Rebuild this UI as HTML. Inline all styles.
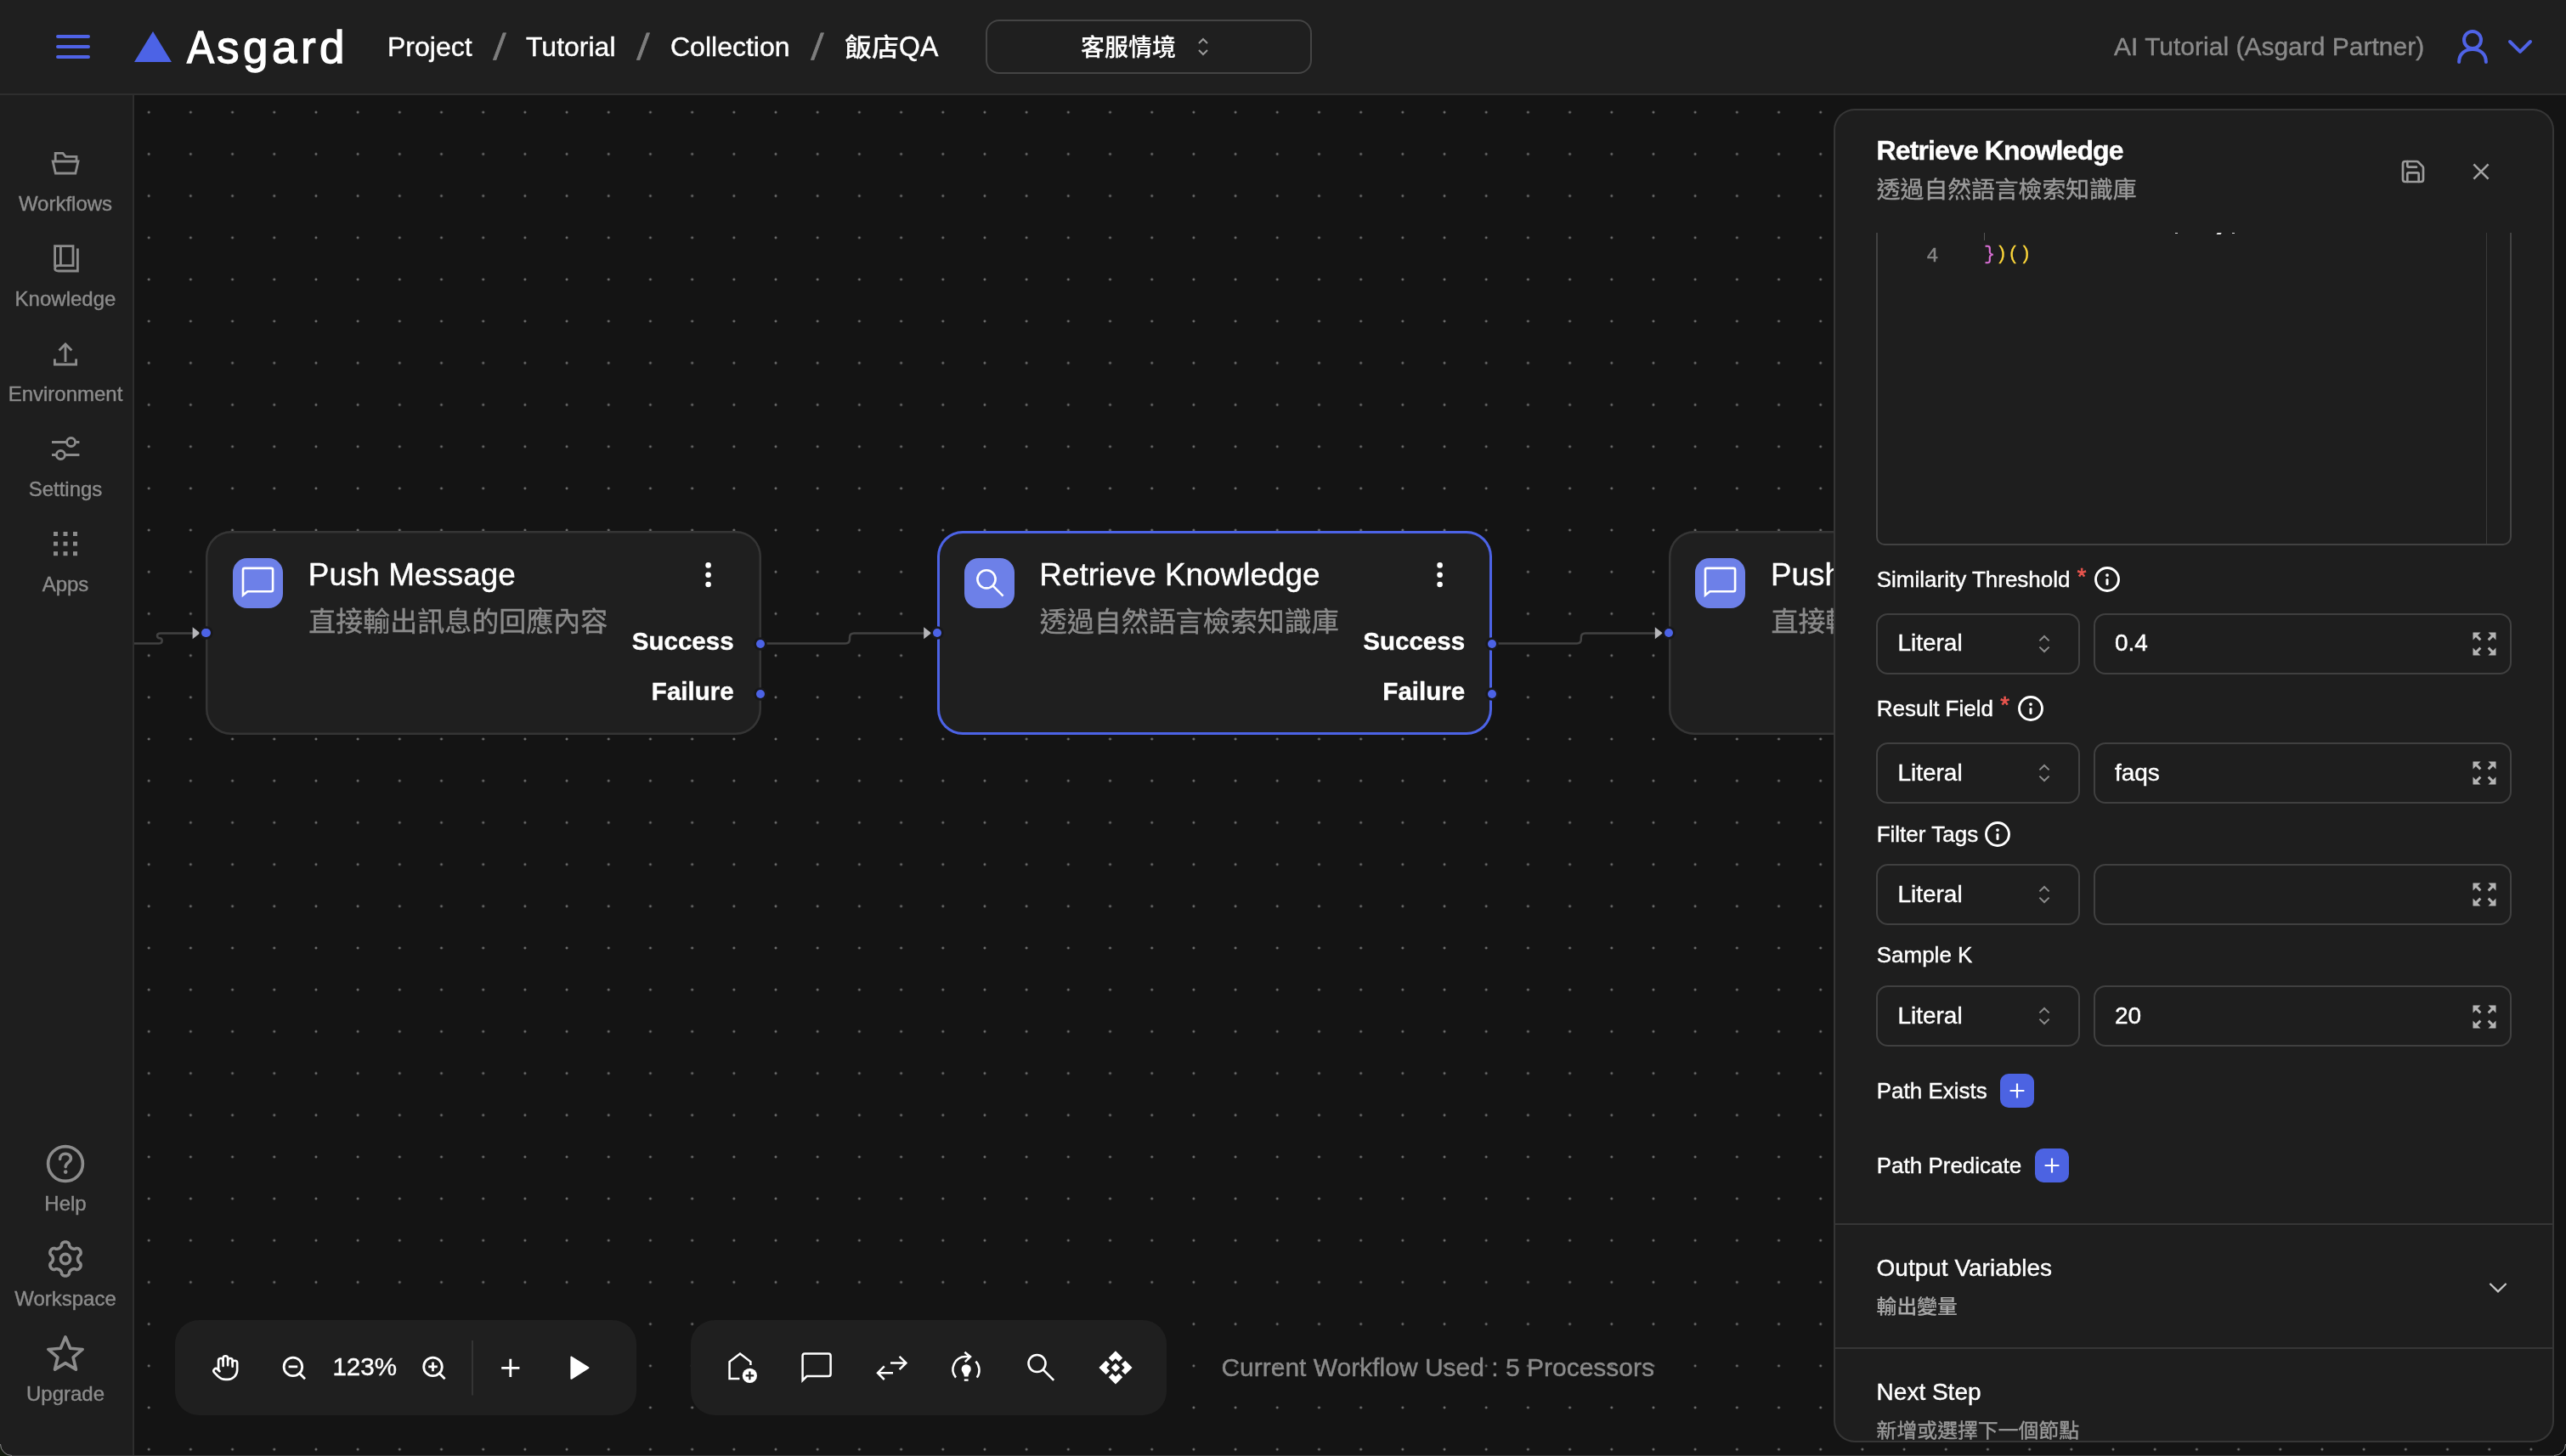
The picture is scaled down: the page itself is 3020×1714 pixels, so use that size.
<!DOCTYPE html>
<html lang="zh-Hant">
<head>
<meta charset="utf-8">
<title>Asgard</title>
<style>
*{box-sizing:border-box;margin:0;padding:0}
html,body{width:3020px;height:1714px;overflow:hidden;background:#141414}
body{will-change:transform;-webkit-text-stroke:0.4px;font-family:"Liberation Sans","Noto Sans CJK TC",sans-serif;color:#fff;position:relative}
.abs{position:absolute}
svg{display:block;overflow:visible}
/* header */
#header{position:absolute;left:0;top:0;width:3020px;height:112px;background:#1f1f1f;border-bottom:2px solid #2e2e2e;z-index:5}
#header .t{position:absolute;white-space:nowrap;line-height:1}
/* sidebar */
#sidebar{position:absolute;left:0;top:112px;width:158px;height:1602px;background:#1e1e1e;border-right:2px solid #2e2e2e;z-index:4}
.sl{position:absolute;left:0;width:154px;text-align:center;font-size:24px;line-height:1;color:#8c8c8c;white-space:nowrap}
.si{position:absolute}
/* canvas */
#canvas{position:absolute;left:158px;top:112px;width:2862px;height:1602px;background-color:#141414;overflow:hidden;
background-image:radial-gradient(circle,#7a7a7a 0,#6a6a6a 1px,transparent 1.9px);background-size:49.2px 49.2px;background-position:-7.4px -4.4px}
.node{position:absolute;width:653.3px;height:240px;border-radius:30px;background:#1f1f1f}
.node .ic{position:absolute;left:31.9px;top:31.9px;width:59.1px;height:59.1px;border-radius:17px;background:#6d80e8}
.node .tt{position:absolute;left:120.5px;top:34.4px;font-size:36.9px;line-height:1;white-space:nowrap;color:#fff}
.node .st{position:absolute;left:121px;top:90.5px;font-size:32px;line-height:1;white-space:nowrap;color:#8a8a8a}
.node .o{position:absolute;right:32px;font-size:29.5px;font-weight:bold;line-height:1;white-space:nowrap}
.hd{position:absolute;width:10.2px;height:10.2px;border-radius:50%;background:#4c63e6;box-shadow:0 0 0 2.7px #18181a}
/* panel */
#panel{position:absolute;left:2158px;top:128px;width:848px;height:1570px;background:#1e1e1e;box-shadow:inset 0 0 0 2px #363636;border-radius:25px;z-index:6;overflow:hidden}
#panel .t{position:absolute;white-space:nowrap;line-height:1}
.lbl{position:absolute;left:50.7px;font-size:26px;line-height:1;white-space:nowrap;color:#fff}
.sel{position:absolute;left:50.2px;width:239.9px;height:72px;border:2px solid #404040;border-radius:14px}
.sel span{position:absolute;left:23.2px;top:19.7px;font-size:28px;line-height:1}
.inp{position:absolute;left:305.9px;width:492px;height:72px;border:2px solid #404040;border-radius:14px}
.inp span{position:absolute;left:23.0px;top:19.7px;font-size:28px;line-height:1}
.plus{position:absolute;width:40px;height:40px;border-radius:10px;background:#4c63e2}
.tb{position:absolute;border-radius:28px;background:#1f1f1f}
</style>
</head>
<body>
<div id="canvas">
<svg class="abs" style="left:0;top:0" width="2862" height="1602" viewBox="158 112 2862 1602" fill="none" stroke="#424242" stroke-width="2.5">
<path d="M150 757.6 H186.4 Q190.7 757.6 190.7 754.3 Q190.7 751.4 187.8 751.3 Q185 751.2 185 748.3 Q185 745.4 189 745.4 H228"/>
<path d="M902 757.6 H995 Q1000 757.6 1000 752.6 V750.4 Q1000 745.4 1005 745.4 H1088"/>
<path d="M1762 757.6 H1855.8 Q1860.8 757.6 1860.8 752.6 V750.4 Q1860.8 745.4 1865.8 745.4 H1950"/>
<g fill="#b6b6ba" stroke="none"><polygon points="226.6,738.3 235.6,745.3 226.6,752.3"/><polygon points="1087.2,738.3 1096.2,745.3 1087.2,752.3"/><polygon points="1947.8,738.3 1956.8,745.3 1947.8,752.3"/></g>
</svg>
<div class="node" style="left:84.3px;top:513px;box-shadow:inset 0 0 0 2.5px #353535">
<div class="ic"><svg class="abs" style="left:10px;top:10px" width="40" height="40" viewBox="0 0 40 40"><path d="M2 33.6 V3.9 Q2 1.9 4 1.9 H35.1 Q37.1 1.9 37.1 3.9 V27.3 Q37.1 29.3 35.1 29.3 H7.4 Z" fill="none" stroke="#fff" stroke-width="2.6" stroke-linejoin="miter"/></svg></div>
<div class="tt">Push Message</div>
<div class="st">直接輸出訊息的回應內容</div>
<svg class="abs" style="left:586px;top:35px" width="12" height="34" viewBox="0 0 12 34"><circle cx="5.6" cy="5.4" r="3.3" fill="#fff"/><circle cx="5.6" cy="16.8" r="3.3" fill="#fff"/><circle cx="5.6" cy="28" r="3.3" fill="#fff"/></svg>
<div class="o" style="top:115.1px">Success</div>
<div class="o" style="top:174px">Failure</div>
<div class="hd" style="left:-4.9px;top:115.3px"></div><div class="hd" style="left:648px;top:127.6px"></div><div class="hd" style="left:648px;top:186.5px"></div>
</div>
<div class="node" style="left:944.8px;top:513px;box-shadow:inset 0 0 0 3px #4c63e6">
<div class="ic"><svg class="abs" style="left:10px;top:10px" width="40" height="40" viewBox="0 0 40 40"><circle cx="16" cy="14.8" r="10.6" fill="none" stroke="#fff" stroke-width="2.6"/><path d="M23.6 22.6 L35.6 34.6" stroke="#fff" stroke-width="2.6"/></svg></div>
<div class="tt">Retrieve Knowledge</div>
<div class="st">透過自然語言檢索知識庫</div>
<svg class="abs" style="left:586px;top:35px" width="12" height="34" viewBox="0 0 12 34"><circle cx="5.6" cy="5.4" r="3.3" fill="#fff"/><circle cx="5.6" cy="16.8" r="3.3" fill="#fff"/><circle cx="5.6" cy="28" r="3.3" fill="#fff"/></svg>
<div class="o" style="top:115.1px">Success</div>
<div class="o" style="top:174px">Failure</div>
<div class="hd" style="left:-4.9px;top:115.3px"></div><div class="hd" style="left:648px;top:127.6px"></div><div class="hd" style="left:648px;top:186.5px"></div>
</div>
<div class="node" style="left:1805.5px;top:513px;box-shadow:inset 0 0 0 2.5px #353535">
<div class="ic"><svg class="abs" style="left:10px;top:10px" width="40" height="40" viewBox="0 0 40 40"><path d="M2 33.6 V3.9 Q2 1.9 4 1.9 H35.1 Q37.1 1.9 37.1 3.9 V27.3 Q37.1 29.3 35.1 29.3 H7.4 Z" fill="none" stroke="#fff" stroke-width="2.6" stroke-linejoin="miter"/></svg></div>
<div class="tt">Push Message</div>
<div class="st">直接輸出訊息的回應內容</div>
<svg class="abs" style="left:586px;top:35px" width="12" height="34" viewBox="0 0 12 34"><circle cx="5.6" cy="5.4" r="3.3" fill="#fff"/><circle cx="5.6" cy="16.8" r="3.3" fill="#fff"/><circle cx="5.6" cy="28" r="3.3" fill="#fff"/></svg>
<div class="o" style="top:115.1px">Success</div>
<div class="o" style="top:174px">Failure</div>
<div class="hd" style="left:-4.9px;top:115.3px"></div><div class="hd" style="left:648px;top:127.6px"></div><div class="hd" style="left:648px;top:186.5px"></div>
</div>
<div class="tb" style="left:48.2px;top:1441.7px;width:543px;height:112.3px"></div>
<div class="tb" style="left:655px;top:1441.7px;width:560.2px;height:112.3px"></div>
<div class="abs" id="zoomtxt" style="left:233.4px;top:1482.4px;font-size:29.6px;line-height:1;white-space:nowrap">123%</div>
<div class="abs" id="cwu" style="left:1279.4px;top:1482.6px;font-size:30px;line-height:1;white-space:nowrap;color:#8a8a8a">Current Workflow Used : 5 Processors</div>
<svg class="abs" style="left:0;top:0" width="2862" height="1602" viewBox="158 112 2862 1602" fill="none" stroke="#fff" stroke-width="2.8">
<!-- hand -->
<g transform="translate(248.8 1593.5) scale(1.38)" stroke-width="1.9" stroke-linecap="round" stroke-linejoin="round"><path d="M18 11V6a2 2 0 0 0-2-2a2 2 0 0 0-2 2"/><path d="M14 10V4a2 2 0 0 0-2-2a2 2 0 0 0-2 2v2"/><path d="M10 10.5V6a2 2 0 0 0-2-2a2 2 0 0 0-2 2v8"/><path d="M18 8a2 2 0 1 1 4 0v6a8 8 0 0 1-8 8h-2c-2.8 0-4.5-.86-5.99-2.34l-3.6-3.6a2 2 0 0 1 2.83-2.82L7 15"/></g>
<!-- zoom out -->
<circle cx="344.9" cy="1608.9" r="10.8"/><path d="M339.6 1608.9 H350.2 M352.8 1617 L359 1623.2"/>
<!-- zoom in -->
<circle cx="509.5" cy="1608.9" r="10.8"/><path d="M504.2 1608.9 H514.8 M509.5 1603.6 V1614.2 M517.4 1617 L523.6 1623.2"/>
<!-- divider -->
<path d="M556 1578 V1642.4" stroke="#3a3a3a" stroke-width="1.6"/>
<!-- plus -->
<path d="M590.2 1610.3 H611.4 M600.8 1599.7 V1620.9" stroke-width="2.8"/>
<!-- play -->
<path d="M672.4 1597.6 L692.4 1610.2 L672.4 1622.8 Z" fill="#fff" stroke-width="2" stroke-linejoin="round"/>
<!-- add home -->
<path d="M870.4 1623 H858.6 V1603 L871 1593.6 L883.4 1603 V1607" stroke-width="2.5"/>
<circle cx="882.4" cy="1619.4" r="8.6" fill="#fff" stroke="none"/><path d="M877.6 1619.4 H887.2 M882.4 1614.6 V1624.2" stroke="#1f1f1f" stroke-width="2.2"/>
<!-- message -->
<path d="M944.6 1625 V1596.2 Q944.6 1593.6 947.2 1593.6 H975 Q977.6 1593.6 977.6 1596.2 V1617.4 Q977.6 1620 975 1620 H949.6 Z" stroke-width="2.5" stroke-linejoin="miter"/>
<!-- swap -->
<path d="M1048 1604.4 H1066 M1058.6 1596.8 L1066.4 1604.4 L1058.6 1612.2 M1051 1616.2 H1033.4 M1040.8 1608.4 L1033 1616.2 L1040.8 1624" stroke-width="2.5"/>
<!-- model training -->
<path d="M1125 1621.6 A15 15 0 0 1 1136.4 1597 H1141.6 M1135.4 1591.8 L1142 1597.2 L1135.8 1603.2" stroke-width="2.5"/>
<path d="M1148.4 1602.6 A15 15 0 0 1 1149.8 1621.6" stroke-width="2.5"/>
<path d="M1137.2 1606.2 a5.6 5.6 0 0 1 5.6 5.6 c0 3.2 -3.2 4.6 -3.2 8.6 h-4.8 c0 -4 -3.2 -5.4 -3.2 -8.6 a5.6 5.6 0 0 1 5.6 -5.6 Z" fill="#fff" stroke="none"/><path d="M1134.8 1624.6 H1139.6" stroke-width="2.4"/>
<!-- search -->
<circle cx="1220.5" cy="1605" r="10" stroke-width="2.6"/><path d="M1227.7 1612.3 L1240.2 1624.8" stroke-width="2.6"/>
<!-- api -->
<g><g transform="translate(1291.6 1588.5) scale(1.782)" fill="#fff" stroke="none"><path d="M14.9 12l-2.9 2.9-2.9-2.9 2.9-2.9 2.9 2.9z"/><path d="M12 6l2.12 2.12 2.5-2.5L12 1 7.38 5.62l2.5 2.5L12 6zm-6 6l2.12-2.12-2.5-2.5L1 12l4.62 4.62 2.5-2.5L6 12zm12 0l-2.12 2.12 2.5 2.5L23 12l-4.62-4.62-2.5 2.5L18 12zm-6 6l-2.12-2.12-2.5 2.5L12 23l4.62-4.62-2.5-2.5L12 18z"/></g></g>
</svg>
</div>
<div id="header">
<svg class="abs" style="left:64px;top:39px" width="44" height="32" viewBox="0 0 44 32"><g stroke="#4f63e6" stroke-width="4" stroke-linecap="round"><line x1="4" y1="4" x2="40" y2="4"/><line x1="4" y1="16" x2="40" y2="16"/><line x1="4" y1="28" x2="40" y2="28"/></g></svg>
<svg class="abs" style="left:158px;top:37px" width="44" height="36" viewBox="0 0 44 36"><polygon points="22,0 44,36 0,36" fill="#4c63e6"/></svg>
<div class="t" id="logo" style="left:220px;top:28.8px;font-size:53px;letter-spacing:4.5px;-webkit-text-stroke:1.3px #fff"><span style="letter-spacing:-0.4px;display:inline-block;transform:scaleX(0.91);transform-origin:0 0">A</span>sgard</div>
<div class="t" id="bc1" style="left:456px;top:39px;font-size:32px">Project</div>
<div class="t" style="left:582px;top:34.4px;font-size:43px;color:#7e7e7e;-webkit-text-stroke:0.9px #7e7e7e;transform:skewX(-5.5deg)">/</div>
<div class="t" id="bc2" style="left:619px;top:39px;font-size:32px">Tutorial</div>
<div class="t" style="left:751px;top:34.4px;font-size:43px;color:#7e7e7e;-webkit-text-stroke:0.9px #7e7e7e;transform:skewX(-5.5deg)">/</div>
<div class="t" id="bc3" style="left:789px;top:39px;font-size:32px">Collection</div>
<div class="t" style="left:956px;top:34.4px;font-size:43px;color:#7e7e7e;-webkit-text-stroke:0.9px #7e7e7e;transform:skewX(-5.5deg)">/</div>
<div class="t" id="bc4" style="left:994px;top:34px;font-size:32px;line-height:42px"><span style="font-weight:500;-webkit-text-stroke:0.15px;display:inline-block;transform:scaleY(0.935);transform-origin:50% 88%">飯店</span><span style="display:inline-block;transform:scaleY(1.05);transform-origin:50% 80%">QA</span></div>
<div class="abs" style="left:1160px;top:23px;width:384px;height:64px;border:2px solid #444;border-radius:16px"></div>
<div class="t" id="wf" style="left:1272px;top:36.5px;font-size:28px;line-height:40px;font-weight:500;-webkit-text-stroke:0.15px">客服情境</div>
<svg class="abs" style="left:1409px;top:44px" width="14" height="22" viewBox="0 0 14 22"><path d="M2 7 L7 2 L12 7 M2 15 L7 20 L12 15" fill="none" stroke="#9a9a9a" stroke-width="2"/></svg>
<div class="t" id="ws" style="left:2488px;top:40px;font-size:30px;color:#8a8a8a">AI Tutorial (Asgard Partner)</div>
<svg class="abs" style="left:2890px;top:34px" width="40" height="42" viewBox="0 0 40 42"><circle cx="20" cy="13" r="10" fill="none" stroke="#4f63e6" stroke-width="4"/><path d="M4.1 39 C4.1 29 11.5 24 20 24 C28.5 24 35.9 29 35.9 39" fill="none" stroke="#4f63e6" stroke-width="4" stroke-linecap="round"/></svg>
<svg class="abs" style="left:2951px;top:46px" width="30" height="18" viewBox="0 0 30 18"><path d="M3 3 L15 14.9 L27 3" fill="none" stroke="#4f63e6" stroke-width="4" stroke-linecap="round" stroke-linejoin="round"/></svg>
</div>
<div id="sidebar">
<div class="sl" style="top:115.7px">Workflows</div>
<div class="sl" style="top:227.7px">Knowledge</div>
<div class="sl" style="top:339.7px">Environment</div>
<div class="sl" style="top:451.7px">Settings</div>
<div class="sl" style="top:563.7px">Apps</div>
<div class="sl" style="top:1293.1px">Help</div>
<div class="sl" style="top:1405.1px">Workspace</div>
<div class="sl" style="top:1516.7px">Upgrade</div>
<svg class="si" style="left:60px;top:66px" width="34" height="28" viewBox="0 0 34 28" fill="none" stroke="#8c8c8c" stroke-width="2.8" stroke-linejoin="miter"><path d="M5.2 12 V2.4 H14 L17.2 6.4 H30 V12"/><path d="M2.2 12 H32 L28.8 26 H5.4 Z"/></svg>
<svg class="si" style="left:62px;top:175px" width="32" height="34" viewBox="0 0 32 34" fill="none" stroke="#8c8c8c" stroke-width="2.8" ><path d="M2.6 27 V2.6 H24 V25.6 H7 Q2.6 25.6 2.6 29 Q2.6 32 7 32 H29.4 V5.4"/><path d="M9.4 2.6 V25.6"/></svg>
<svg class="si" style="left:62px;top:290px" width="32" height="30" viewBox="0 0 32 30" fill="none" stroke="#8c8c8c" stroke-width="2.8" ><path d="M15 24 V3 M7.6 10.6 L15 3 L22.4 10.6"/><path d="M2.4 20.6 V27 H27.6 V20.6"/></svg>
<svg class="si" style="left:60px;top:400px" width="36" height="32" viewBox="0 0 36 32" fill="none" stroke="#8c8c8c" stroke-width="2.8" ><path d="M1 8.5 H18 M29.6 8.5 H33.4"/><circle cx="23.6" cy="8.5" r="5"/><path d="M1 23.5 H5.6 M17 23.5 H33.4"/><circle cx="11.4" cy="23.5" r="5"/></svg>
<svg class="si" style="left:63.2px;top:514.2px" width="30" height="30" viewBox="0 0 30 30"><rect x="0.0" y="0.0" width="5" height="5" fill="#8c8c8c" stroke="none"/><rect x="11.5" y="0.0" width="5" height="5" fill="#8c8c8c" stroke="none"/><rect x="23.0" y="0.0" width="5" height="5" fill="#8c8c8c" stroke="none"/><rect x="0.0" y="11.6" width="5" height="5" fill="#8c8c8c" stroke="none"/><rect x="11.5" y="11.6" width="5" height="5" fill="#8c8c8c" stroke="none"/><rect x="23.0" y="11.6" width="5" height="5" fill="#8c8c8c" stroke="none"/><rect x="0.0" y="23.2" width="5" height="5" fill="#8c8c8c" stroke="none"/><rect x="11.5" y="23.2" width="5" height="5" fill="#8c8c8c" stroke="none"/><rect x="23.0" y="23.2" width="5" height="5" fill="#8c8c8c" stroke="none"/></svg>
<svg class="si" style="left:53px;top:1234px" width="48" height="48" viewBox="-24 -24 48 48" fill="none" stroke="#8c8c8c" stroke-width="3.6"><circle cx="0" cy="0" r="20.4"/><path d="M-6.4 -5.6 C-6.4 -9.6 -3.4 -11.8 0 -11.8 C3.6 -11.8 6.4 -9.6 6.4 -6.2 C6.4 -1.6 0.2 -1.6 0.2 3.6" stroke-linecap="round"/><circle cx="0.2" cy="9.6" r="2.3" fill="#8c8c8c" stroke="none"/></svg>
<svg class="si" style="left:53px;top:1346px" width="48" height="48" viewBox="-24 -24 48 48" fill="none" stroke="#8c8c8c" stroke-width="3.6" stroke-linejoin="round"><path d="M0.00,-20.05 L0.70,-20.00 L1.39,-19.87 L2.06,-19.64 L2.71,-19.31 L3.33,-18.89 L3.90,-18.33 L4.38,-17.56 L4.55,-15.87 L4.90,-15.08 L5.27,-14.49 L5.65,-14.00 L6.04,-13.57 L6.44,-13.20 L6.85,-12.88 L7.27,-12.60 L7.73,-12.37 L8.21,-12.17 L8.73,-12.02 L9.29,-11.90 L9.91,-11.81 L10.61,-11.79 L11.47,-11.87 L13.02,-12.57 L13.93,-12.54 L14.69,-12.33 L15.37,-12.01 L15.98,-11.61 L16.51,-11.14 L16.98,-10.61 L17.36,-10.03 L17.67,-9.40 L17.90,-8.73 L18.04,-8.03 L18.08,-7.31 L18.02,-6.56 L17.82,-5.79 L17.39,-4.99 L16.02,-3.99 L15.51,-3.30 L15.19,-2.68 L14.95,-2.10 L14.77,-1.55 L14.65,-1.02 L14.57,-0.51 L14.55,-0.00 L14.57,0.51 L14.65,1.02 L14.77,1.55 L14.95,2.10 L15.19,2.68 L15.51,3.30 L16.02,3.99 L17.39,4.99 L17.82,5.79 L18.02,6.56 L18.08,7.31 L18.04,8.03 L17.90,8.73 L17.67,9.40 L17.36,10.02 L16.98,10.61 L16.51,11.14 L15.98,11.61 L15.37,12.01 L14.69,12.33 L13.93,12.54 L13.02,12.57 L11.47,11.87 L10.61,11.79 L9.91,11.81 L9.29,11.90 L8.73,12.02 L8.21,12.17 L7.73,12.37 L7.27,12.60 L6.85,12.88 L6.44,13.20 L6.04,13.57 L5.65,14.00 L5.27,14.49 L4.90,15.08 L4.55,15.87 L4.38,17.56 L3.90,18.33 L3.33,18.89 L2.71,19.31 L2.06,19.64 L1.39,19.87 L0.70,20.00 L0.00,20.05 L-0.70,20.00 L-1.39,19.87 L-2.06,19.64 L-2.71,19.31 L-3.33,18.89 L-3.90,18.33 L-4.38,17.56 L-4.55,15.87 L-4.90,15.08 L-5.27,14.49 L-5.65,14.00 L-6.04,13.57 L-6.44,13.20 L-6.85,12.88 L-7.28,12.60 L-7.73,12.37 L-8.21,12.17 L-8.73,12.02 L-9.29,11.90 L-9.91,11.81 L-10.61,11.79 L-11.47,11.87 L-13.02,12.57 L-13.93,12.54 L-14.69,12.33 L-15.37,12.01 L-15.98,11.61 L-16.51,11.14 L-16.98,10.61 L-17.36,10.03 L-17.67,9.40 L-17.90,8.73 L-18.04,8.03 L-18.08,7.31 L-18.02,6.56 L-17.82,5.79 L-17.39,4.99 L-16.02,3.99 L-15.51,3.30 L-15.19,2.68 L-14.95,2.10 L-14.77,1.55 L-14.65,1.02 L-14.57,0.51 L-14.55,0.00 L-14.57,-0.51 L-14.65,-1.02 L-14.77,-1.55 L-14.95,-2.10 L-15.19,-2.68 L-15.51,-3.30 L-16.02,-3.99 L-17.39,-4.99 L-17.82,-5.79 L-18.02,-6.56 L-18.08,-7.31 L-18.04,-8.03 L-17.90,-8.73 L-17.67,-9.40 L-17.36,-10.03 L-16.98,-10.61 L-16.51,-11.14 L-15.98,-11.61 L-15.37,-12.01 L-14.69,-12.33 L-13.93,-12.54 L-13.02,-12.57 L-11.47,-11.87 L-10.61,-11.79 L-9.91,-11.81 L-9.29,-11.90 L-8.73,-12.02 L-8.21,-12.17 L-7.73,-12.37 L-7.28,-12.60 L-6.85,-12.88 L-6.44,-13.20 L-6.04,-13.57 L-5.65,-14.00 L-5.27,-14.49 L-4.90,-15.08 L-4.55,-15.87 L-4.38,-17.56 L-3.90,-18.33 L-3.33,-18.89 L-2.71,-19.31 L-2.06,-19.64 L-1.39,-19.87 L-0.70,-20.00 Z"/><circle cx="0" cy="0" r="5.6"/></svg>
<svg class="si" style="left:53px;top:1459.3px" width="48" height="48" viewBox="-24 -24 48 48" fill="none" stroke="#8c8c8c" stroke-width="3.6" stroke-linejoin="round"><path d="M0.00,-21.20 L5.64,-7.77 L20.16,-6.55 L9.13,2.97 L12.46,17.15 L0.00,9.60 L-12.46,17.15 L-9.13,2.97 L-20.16,-6.55 L-5.64,-7.77 Z"/></svg>
</div>
<div id="panel">
<div class="t" id="ptitle" style="left:50.5px;top:33.4px;font-size:32px;font-weight:bold;letter-spacing:-0.87px">Retrieve Knowledge</div>
<div class="t" id="psub" style="left:50.8px;top:81.6px;font-size:27.8px;color:#9a9a9a">透過自然語言檢索知識庫</div>
<svg class="abs" style="left:666px;top:58px" width="32" height="32" viewBox="0 0 24 24" fill="none" stroke="#9c9c9c" stroke-width="2" stroke-linecap="round" stroke-linejoin="round"><path d="M15.2 3a2 2 0 0 1 1.4.6l3.8 3.8a2 2 0 0 1 .6 1.4V19a2 2 0 0 1-2 2H5a2 2 0 0 1-2-2V5a2 2 0 0 1 2-2z"/><path d="M17 21v-7a1 1 0 0 0-1-1H8a1 1 0 0 0-1 1v7"/><path d="M7 3v4a1 1 0 0 0 1 1h7"/></svg>
<svg class="abs" style="left:750.1px;top:61.9px" width="24" height="24" viewBox="-12 -12 24 24" fill="none" stroke="#a2a2a2" stroke-width="2.6"><path d="M-8.6 -8.6 L8.6 8.6 M8.6 -8.6 L-8.6 8.6"/></svg>
<div class="abs" style="left:50.2px;top:146px;width:747.8px;height:367.5px;border:2px solid #424242;border-top:none;border-radius:0 0 10px 10px"></div>
<div class="abs" style="left:768.2px;top:146px;width:1.2px;height:365.5px;background:#3a3a3a"></div>
<div class="abs" style="left:177px;top:146px;width:1.2px;height:8.5px;background:#555"></div>
<div class="abs" style="left:401.5px;top:146px;width:3px;height:1px;background:#ddd"></div><div class="abs" style="left:451.4px;top:146px;width:4.6px;height:2.4px;background:#e6e6e6;transform:skewX(-30deg)"></div><div class="abs" style="left:468.6px;top:146px;width:3.2px;height:1.4px;background:#ddd"></div>
<div class="t" id="lnum" style="left:72px;width:51.4px;text-align:right;top:162.4px;font-size:23.5px;font-family:'Liberation Mono',monospace;color:#858585">4</div>
<div class="t" id="code" style="left:177px;top:161.2px;font-size:22px;letter-spacing:0.85px;-webkit-text-stroke:0.3px;font-family:'Liberation Mono',monospace;color:#ffd83a"><span style="color:#da70d6">}</span>)()</div>
<div class="lbl" style="top:541.1px">Similarity Threshold<span style="color:#e8554e;margin-left:0.6px;font-size:27.5px;line-height:0;position:relative;top:-3.6px;-webkit-text-stroke:0.7px #e8554e"> *</span></div>
<svg class="abs" style="left:306px;top:538px" width="32" height="32" viewBox="-16 -16 32 32" fill="none" stroke="#fff" stroke-width="2.9"><circle r="13.5"/><path d="M0 0.4 V5.6" stroke-width="3" stroke-linecap="round"/><circle cx="0" cy="-4.9" r="1.9" fill="#fff" stroke="none"/></svg>
<div class="sel" style="top:593.8px"><span>Literal</span></div>
<svg class="abs" style="left:240px;top:617.8px" width="16" height="24" viewBox="-8 -12 16 24" fill="none" stroke="#8a8a8a" stroke-width="2"><path d="M-5.6 -3.6 L0 -9 L5.6 -3.6 M-5.6 3.6 L0 9 L5.6 3.6"/></svg>
<div class="inp" style="top:593.8px"><span>0.4</span></div>
<svg class="abs" style="left:748px;top:612.0px" width="36" height="36" viewBox="0 0 24 24" fill="#b4b4b4"><path d="M15 3l2.3 2.3-2.89 2.87 1.42 1.42L18.7 6.7 21 9V3h-6zM3 9l2.3-2.3 2.87 2.89 1.42-1.42L6.7 5.3 9 3H3v6zm6 12l-2.3-2.3 2.89-2.87-1.42-1.42L5.3 17.3 3 15v6h6zm12-6l-2.3 2.3-2.87-2.89-1.42 1.42 2.89 2.87L15 21h6v-6z"/></svg>
<div class="lbl" style="top:692.8px">Result Field<span style="color:#e8554e;margin-left:0.6px;font-size:27.5px;line-height:0;position:relative;top:-3.6px;-webkit-text-stroke:0.7px #e8554e"> *</span></div>
<svg class="abs" style="left:216px;top:689.8px" width="32" height="32" viewBox="-16 -16 32 32" fill="none" stroke="#fff" stroke-width="2.9"><circle r="13.5"/><path d="M0 0.4 V5.6" stroke-width="3" stroke-linecap="round"/><circle cx="0" cy="-4.9" r="1.9" fill="#fff" stroke="none"/></svg>
<div class="sel" style="top:746.2px"><span>Literal</span></div>
<svg class="abs" style="left:240px;top:770.2px" width="16" height="24" viewBox="-8 -12 16 24" fill="none" stroke="#8a8a8a" stroke-width="2"><path d="M-5.6 -3.6 L0 -9 L5.6 -3.6 M-5.6 3.6 L0 9 L5.6 3.6"/></svg>
<div class="inp" style="top:746.2px"><span>faqs</span></div>
<svg class="abs" style="left:748px;top:764.4px" width="36" height="36" viewBox="0 0 24 24" fill="#b4b4b4"><path d="M15 3l2.3 2.3-2.89 2.87 1.42 1.42L18.7 6.7 21 9V3h-6zM3 9l2.3-2.3 2.87 2.89 1.42-1.42L6.7 5.3 9 3H3v6zm6 12l-2.3-2.3 2.89-2.87-1.42-1.42L5.3 17.3 3 15v6h6zm12-6l-2.3 2.3-2.87-2.89-1.42 1.42 2.89 2.87L15 21h6v-6z"/></svg>
<div class="lbl" style="top:840.6px">Filter Tags</div>
<svg class="abs" style="left:176.9px;top:837.9px" width="32" height="32" viewBox="-16 -16 32 32" fill="none" stroke="#fff" stroke-width="2.9"><circle r="13.5"/><path d="M0 0.4 V5.6" stroke-width="3" stroke-linecap="round"/><circle cx="0" cy="-4.9" r="1.9" fill="#fff" stroke="none"/></svg>
<div class="sel" style="top:889px"><span>Literal</span></div>
<svg class="abs" style="left:240px;top:913px" width="16" height="24" viewBox="-8 -12 16 24" fill="none" stroke="#8a8a8a" stroke-width="2"><path d="M-5.6 -3.6 L0 -9 L5.6 -3.6 M-5.6 3.6 L0 9 L5.6 3.6"/></svg>
<div class="inp" style="top:889px"><span></span></div>
<svg class="abs" style="left:748px;top:907.2px" width="36" height="36" viewBox="0 0 24 24" fill="#b4b4b4"><path d="M15 3l2.3 2.3-2.89 2.87 1.42 1.42L18.7 6.7 21 9V3h-6zM3 9l2.3-2.3 2.87 2.89 1.42-1.42L6.7 5.3 9 3H3v6zm6 12l-2.3-2.3 2.89-2.87-1.42-1.42L5.3 17.3 3 15v6h6zm12-6l-2.3 2.3-2.87-2.89-1.42 1.42 2.89 2.87L15 21h6v-6z"/></svg>
<div class="lbl" style="top:982.9px">Sample K</div>
<div class="sel" style="top:1032.4px"><span>Literal</span></div>
<svg class="abs" style="left:240px;top:1056.4px" width="16" height="24" viewBox="-8 -12 16 24" fill="none" stroke="#8a8a8a" stroke-width="2"><path d="M-5.6 -3.6 L0 -9 L5.6 -3.6 M-5.6 3.6 L0 9 L5.6 3.6"/></svg>
<div class="inp" style="top:1032.4px"><span>20</span></div>
<svg class="abs" style="left:748px;top:1050.6px" width="36" height="36" viewBox="0 0 24 24" fill="#b4b4b4"><path d="M15 3l2.3 2.3-2.89 2.87 1.42 1.42L18.7 6.7 21 9V3h-6zM3 9l2.3-2.3 2.87 2.89 1.42-1.42L6.7 5.3 9 3H3v6zm6 12l-2.3-2.3 2.89-2.87-1.42-1.42L5.3 17.3 3 15v6h6zm12-6l-2.3 2.3-2.87-2.89-1.42 1.42 2.89 2.87L15 21h6v-6z"/></svg>
<div class="lbl" style="top:1142.7px">Path Exists</div>
<div class="plus" style="left:196.2px;top:1135.8px"><svg class="abs" style="left:8px;top:8px" width="24" height="24" viewBox="-12 -12 24 24" stroke="#fff" stroke-width="2.2"><path d="M-8.4 0 H8.4 M0 -8.4 V8.4"/></svg></div>
<div class="lbl" style="top:1231.0px">Path Predicate</div>
<div class="plus" style="left:236.9px;top:1224.2px"><svg class="abs" style="left:8px;top:8px" width="24" height="24" viewBox="-12 -12 24 24" stroke="#fff" stroke-width="2.2"><path d="M-8.4 0 H8.4 M0 -8.4 V8.4"/></svg></div>
<div class="abs" style="left:0;top:1311.8px;width:848px;height:2px;background:#363636"></div>
<div class="t" style="left:50.6px;top:1351px;font-size:28px">Output Variables</div>
<div class="t" id="ov2" style="left:50.6px;top:1397.9px;font-size:23.8px;color:#a8a8a8;font-weight:500;-webkit-text-stroke:0.2px;transform:scaleY(0.95)">輸出變量</div>
<svg class="abs" style="left:770px;top:1380px" width="24" height="16" viewBox="0 0 24 16" fill="none" stroke="#c8c8c8" stroke-width="2.2"><path d="M2.4 3 L12 12.4 L21.6 3"/></svg>
<div class="abs" style="left:0;top:1458px;width:848px;height:2px;background:#363636"></div>
<div class="t" style="left:50.6px;top:1497px;font-size:28px">Next Step</div>
<div class="t" id="ns2" style="left:50.6px;top:1544.4px;font-size:23.85px;color:#9a9a9a;transform:scaleY(0.96)">新增或選擇下一個節點</div>
</div>
<svg class="abs" style="left:0;top:1700px;z-index:20" width="14" height="14" viewBox="0 0 14 14"><path d="M0 0 V14 H14 A14 14 0 0 1 0 0 Z" fill="#141d10"/><path d="M0.5 0 A13.5 13.5 0 0 0 14 13.5" fill="none" stroke="#8a8a8a" stroke-width="1"/></svg>
<svg class="abs" style="left:3006px;top:1700px;z-index:20" width="14" height="14" viewBox="0 0 14 14"><path d="M14 0 V14 H0 A14 14 0 0 0 14 0 Z" fill="#050708"/><path d="M13.5 0 A13.5 13.5 0 0 1 0 13.5" fill="none" stroke="#8a8a8a" stroke-width="1"/></svg>
<div class="abs" style="left:14px;top:1713px;width:2992px;height:1px;background:#3a3a3a;z-index:20"></div>
</body>
</html>
